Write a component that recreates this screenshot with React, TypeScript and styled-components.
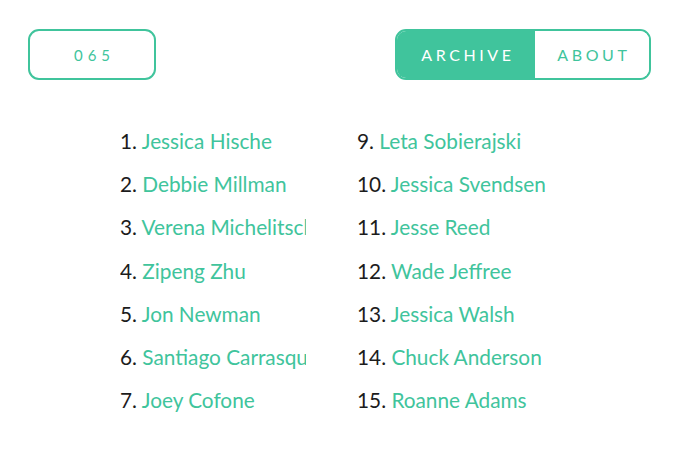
import React from "react";
import styled, { createGlobalStyle } from "styled-components";

const GREEN = "#40c49c";

const Global = createGlobalStyle`
  html, body { margin: 0; padding: 0; background: #fff; }
  body { font-family: "Lato", "Noto Sans", sans-serif; }
`;

const Page = styled.div`
  width: 680px;
  height: 455px;
  box-sizing: border-box;
  padding: 29px 29px 0 28px;
`;

const Header = styled.div`
  display: flex;
  justify-content: space-between;
  align-items: flex-start;
`;

const Counter = styled.div`
  width: 128px;
  height: 51px;
  box-sizing: border-box;
  border: 2.5px solid ${GREEN};
  border-radius: 11px;
  display: flex;
  align-items: center;
  justify-content: center;
  color: ${GREEN};
  font-size: 15px;
  letter-spacing: 5px;
  padding-left: 5px;
`;

const Toggle = styled.div`
  width: 256px;
  height: 51px;
  box-sizing: border-box;
  border: 2.5px solid ${GREEN};
  border-radius: 11px;
  display: flex;
  overflow: hidden;
`;

const Tab = styled.div<{ $active?: boolean; $w: number }>`
  width: ${(p) => p.$w}px;
  display: flex;
  align-items: center;
  justify-content: center;
  background: ${(p) => (p.$active ? GREEN : "#fff")};
  color: ${(p) => (p.$active ? "#fff" : GREEN)};
  font-size: 16px;
  font-weight: 400;
  letter-spacing: 3.6px;
  padding-left: 4px;
  box-sizing: border-box;
`;

const List = styled.div`
  display: grid;
  grid-template-columns: 186px 240px;
  column-gap: 51px;
  margin: 39px 0 0 92px;
`;

const Column = styled.ol`
  list-style: none;
  margin: 0;
  padding: 0;
  display: flex;
  flex-direction: column;
`;

const Row = styled.li`
  height: 43.2px;
  line-height: 43px;
  font-size: 20.8px;
  white-space: nowrap;
  overflow: hidden;
`;

const Num = styled.span`
  color: #1c1c1c;
`;

const Name = styled.span`
  color: ${GREEN};
`;

const left = [
  "Jessica Hische",
  "Debbie Millman",
  "Verena Michelitsch",
  "Zipeng Zhu",
  "Jon Newman",
  "Santiago Carrasquilla",
  "Joey Cofone",
];
const right = [
  "Leta Sobierajski",
  "Jessica Svendsen",
  "Jesse Reed",
  "Wade Jeffree",
  "Jessica Walsh",
  "Chuck Anderson",
  "Roanne Adams",
];

export default function App() {
  return (
    <>
      <Global />
      <Page>
        <Header>
          <Counter>065</Counter>
          <Toggle>
            <Tab $active $w={140}>ARCHIVE</Tab>
            <Tab $w={116}>ABOUT</Tab>
          </Toggle>
        </Header>
        <List>
          <Column>
            {left.map((n, i) => (
              <Row key={n}>
                <Num>{i + 1}.</Num> <Name>{n}</Name>
              </Row>
            ))}
          </Column>
          <Column>
            {right.map((n, i) => (
              <Row key={n}>
                <Num>{i + 9}.</Num> <Name>{n}</Name>
              </Row>
            ))}
          </Column>
        </List>
      </Page>
    </>
  );
}
